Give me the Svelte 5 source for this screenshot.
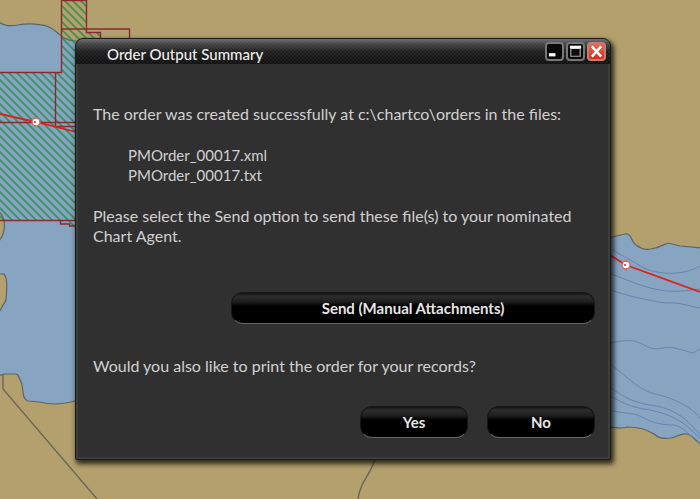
<script lang="ts">
  let visible = $state(true);
  let maximised = $state(false);

  const files = ["PMOrder_00017.xml", "PMOrder_00017.txt"];

  // depth contours east of the dialog
  const contours = [
    "M600 242 C614 252 628 258 642 267 C657 275 683 276 700 266",
    "M600 271 C625 277 640 288 666 291 C680 292 690 290 700 289",
    "M600 287 C622 294 644 300 665 303 C680 302 688 306 700 308",
    "M600 346 C632 336 638 342 648 347 C660 352 663 345 675 348 L693 353 L700 349",
    "M600 358 C620 368 636 390 655 394 C675 398 692 408 700 418",
    "M600 379 C620 396 632 402 650 405 C675 408 688 420 700 435",
    "M600 390 C624 404 630 407 650 410 C675 415 688 425 700 439",
    "M600 406 C616 415 631 411 642 417 C654 424 665 425 674 425 C685 427 690 437 700 444",
  ];

  const waypoints = [
    { x: 36, y: 122 },
    { x: 626, y: 265 },
  ];
</script>

<div class="page">
  <svg class="map" viewBox="0 0 700 499" preserveAspectRatio="xMidYMid slice" aria-hidden="true">
    <defs>
      <pattern id="hatch" width="8" height="8" patternUnits="userSpaceOnUse">
        <path d="M-2 -2 L10 10 M-2 6 L2 10 M6 -2 L10 2" stroke="#1f8a44" stroke-opacity="0.75" stroke-width="1.8" />
      </pattern>
    </defs>
    <rect width="700" height="499" fill="#b3a06d" />

    <g fill="#87a5c1" stroke="#59656c" stroke-width="1.2">
      <path d="M-2 21 C4 27 12 26 18 25 C28 23 42 24 49 27 C60 32 60 40 75 41 L100 41 L100 396 L75 401 C60 405 50 405 40 402 L28 401 C21 399 24 387 21 382 C18 375 18 374 15 374 L4 374 L-2 376 Z" />
      <path d="M600 240 L612 237 L625 234 C632 233 631 242 636 245 C641 249 646 250 651 249 C660 248 664 244 668 243 L680 246 L702 248 L702 446 C695 439 692 435 687 434 C680 433 677 437 671 438 C662 439 658 438 654 434 C648 430 640 427 627 427 C620 430 615 426 600 427 Z" />
    </g>
    <g fill="#b3a06d" stroke="#59656c" stroke-width="1.2">
      <path d="M-2 211 C7 217 6 234 -2 242 Z" />
      <path d="M-2 274 L4 274 C9 279 6 294 6 300 L-2 314 Z" />
    </g>
    <g fill="none" stroke="#6684b0" stroke-width="1">
      {#each contours as d}
        <path {d} />
      {/each}
    </g>
    <g fill="none" stroke="#6a6859" stroke-width="1.4">
      <path d="M3 374 L3 389 L97 499" />
      <path d="M376 455 C372 475 360 480 358 500" />
    </g>

    <path d="M0 73 H62 V0 H87 V32 H100 V45 H75 V226 H69 L60 220 H0 Z" fill="url(#hatch)" />
    <g fill="none" stroke="#842c32" stroke-width="1.4">
      <path d="M0 72.5 H61.5 V0.5 H86.5 V32.5 H100.5 V38" />
      <path d="M62 29 H129.5 V40" />
      <path d="M55.5 73 V126.5 H76 M0 122.5 H76 M0 220.5 H76 M60.5 220 V224 H69.5 V226 H76" />
    </g>
    <path d="M0 114 L36 122 L76 132 M600 249 L626 265 L700 292" fill="none" stroke="#e01f18" stroke-width="1.8" />
    {#each waypoints as p}
      <circle cx={p.x} cy={p.y} r="4" fill="#fff" stroke="#d95e5c" stroke-width="1.4" />
      <circle cx={p.x - 1} cy={p.y} r="1" fill="#e01f18" />
    {/each}
  </svg>

  {#if visible}
    <div class="dialog" class:maximised role="dialog" aria-labelledby="dialog-title">
      <header class="titlebar">
        <h1 id="dialog-title">Order Output Summary</h1>
        <div class="window-buttons">
          <button class="win" aria-label="Minimise" onclick={() => (visible = false)}>
            <svg viewBox="0 0 16 16"><path d="M2 11.5 H9" stroke="#fff" stroke-width="3.4" /></svg>
          </button>
          <button class="win" aria-label="Maximise" onclick={() => (maximised = !maximised)}>
            <svg viewBox="0 0 16 16">
              <path d="M2 3.5 H14" stroke="#fff" stroke-width="3.4" />
              <path d="M3 4 V13 H13 V4" fill="none" stroke="#aaa" stroke-width="1.2" />
            </svg>
          </button>
          <button class="win close" aria-label="Close" onclick={() => (visible = false)}>
            <svg viewBox="0 0 16 16"><path d="M3 2.5 L13 13.5 M13 2.5 L3 13.5" stroke="#fff" stroke-width="2.6" /></svg>
          </button>
        </div>
      </header>

      <div class="content">
        <p>The order was created successfully at c:\chartco\orders in the files:</p>
        <ul>
          {#each files as file}
            <li>{file}</li>
          {/each}
        </ul>
        <p>Please select the Send option to send these file(s) to your nominated Chart Agent.</p>
        <button class="glossy send">Send (Manual Attachments)</button>
        <p>Would you also like to print the order for your records?</p>
        <div class="answers">
          <button class="glossy">Yes</button>
          <button class="glossy">No</button>
        </div>
      </div>
    </div>
  {/if}
</div>

<style>
  :global(body) {
    margin: 0;
  }

  .page {
    position: relative;
    box-sizing: border-box;
    min-height: 100vh;
    padding: 38px 89px 38px 75px;
    overflow: hidden;
    background: #b3a06d;
    font-family: Lato, "Liberation Sans", sans-serif;
    font-size: 16px;
    line-height: 20px;
  }

  .map {
    position: absolute;
    inset: 0;
    width: 100%;
    height: 100%;
  }

  .dialog {
    position: relative;
    border: 1px solid #1c1c1c;
    border-radius: 8px 8px 2px 2px;
    background: #303030;
    color: #d0d0d0;
    box-shadow: inset 0 0 0 2px #3d3d3d, 2px 3px 5px 1px rgba(0, 0, 0, 0.75);
  }

  .dialog.maximised {
    margin: -38px -89px -38px -75px;
  }

  .titlebar {
    display: flex;
    align-items: center;
    justify-content: space-between;
    height: 25px;
    padding: 0 4px 0 31px;
    border-radius: 7px 7px 0 0;
    background:
      linear-gradient(to bottom, #707070 0, rgba(80, 80, 80, 0.85) 5px, rgba(40, 40, 40, 0.5) 13px, rgba(16, 16, 16, 0.5) 100%),
      repeating-conic-gradient(#111 0 25%, #292929 0 50%) 0 0 / 4px 4px;
  }

  h1 {
    margin: 0;
    padding-top: 4px;
    color: #eee;
    font-size: 15px;
    font-weight: 500;
  }

  .window-buttons {
    display: flex;
    gap: 2px;
  }

  .win {
    width: 19px;
    height: 19px;
    padding: 0;
    border: 2px solid #777;
    border-radius: 4px;
    background: #080808;
    cursor: pointer;
  }

  .win svg {
    display: block;
    width: 100%;
    height: 100%;
  }

  .close {
    border-color: #b98078;
    background: linear-gradient(#ee6655, #d92c1c);
  }

  .content {
    padding: 40px 15px 21px 17px;
  }

  p {
    margin: 0;
  }

  ul {
    margin: 21px 0;
    padding: 0 0 0 35px;
    font-size: 15px;
    list-style: none;
  }

  .glossy {
    width: 108px;
    height: 32px;
    padding: 0;
    border: 1px solid #161616;
    border-bottom-color: #666;
    border-radius: 12px;
    background: linear-gradient(#111 0, #2d2d2d 3px, #1d1d1d 9px, #000 13px);
    color: #e6e6e6;
    font: inherit;
    font-size: 15px;
    font-weight: 700;
    cursor: pointer;
  }

  .glossy:hover {
    color: #fff;
  }

  .send {
    display: block;
    width: 364px;
    max-width: 100%;
    margin: 46px 0 32px auto;
  }

  .answers {
    display: flex;
    justify-content: flex-end;
    gap: 19px;
    margin-top: 30px;
  }
</style>
